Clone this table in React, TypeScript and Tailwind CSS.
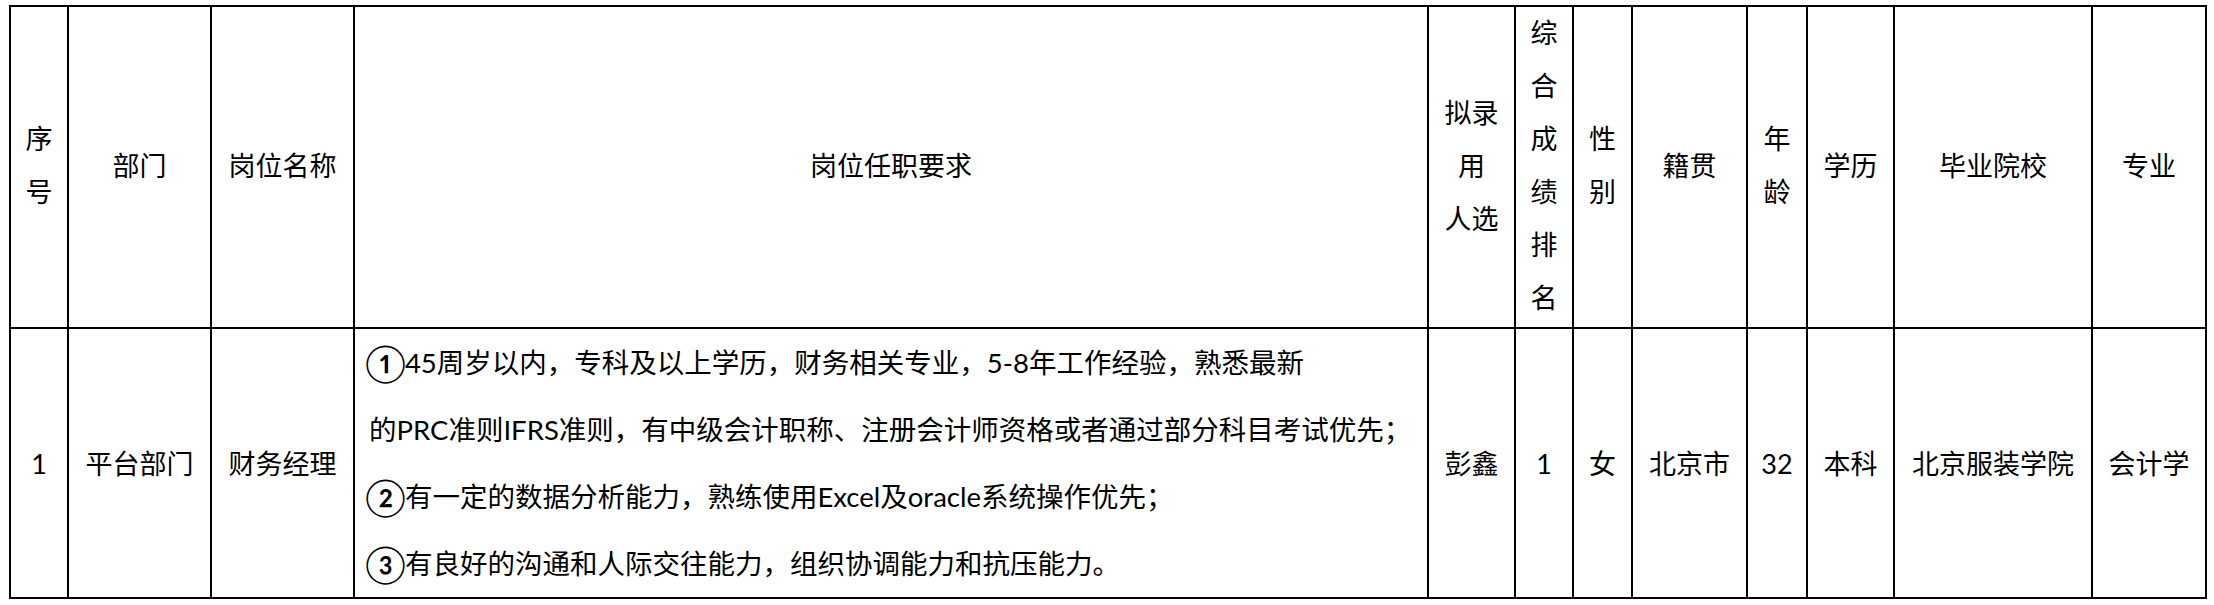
import * as React from "react";

// 招聘公示表 — 一行表头 + 一行数据，黑色网格线用 gap 透出背景实现
const headers: string[][] = [
  ["序", "号"],
  ["部门"],
  ["岗位名称"],
  ["岗位任职要求"],
  ["拟录", "用", "人选"],
  ["综", "合", "成", "绩", "排", "名"],
  ["性", "别"],
  ["籍贯"],
  ["年", "龄"],
  ["学历"],
  ["毕业院校"],
  ["专业"],
];

const requirements: [string, string][] = [
  ["①", "45周岁以内，专科及以上学历，财务相关专业，5-8年工作经验，熟悉最新"],
  ["", "的PRC准则IFRS准则，有中级会计职称、注册会计师资格或者通过部分科目考试优先；"],
  ["②", "有一定的数据分析能力，熟练使用Excel及oracle系统操作优先；"],
  ["③", "有良好的沟通和人际交往能力，组织协调能力和抗压能力。"],
];

function Cell({ children }: { children: React.ReactNode }) {
  return (
    <div className="bg-white flex items-center justify-center text-center text-[27px] text-black leading-[53px] font-['Lato','Noto_Sans_CJK_SC',sans-serif]">
      {children}
    </div>
  );
}

export default function App() {
  return (
    <div className="bg-white w-[2214px] h-[605px] pl-[9px] pt-[5px]">
      <div className="grid w-fit bg-black p-[2px] gap-[2px] grid-cols-[56px_141px_141px_1072px_85px_56px_57px_113px_58px_85px_196px_112px] grid-rows-[320px_268px]">
        {headers.map((lines, i) => (
          <div
            key={i}
            className="bg-white flex flex-col items-center justify-center text-center text-[27px] text-black leading-[53px] whitespace-nowrap font-['Liberation_Serif','Noto_Sans_CJK_SC',serif]"
          >
            {lines.map((l, j) => (
              <div key={j}>{l}</div>
            ))}
          </div>
        ))}

        <Cell>1</Cell>
        <Cell>平台部门</Cell>
        <Cell>财务经理</Cell>
        <div className="bg-white flex flex-col justify-center pl-[14px] text-[27.5px] text-black leading-[67px] whitespace-nowrap font-['Lato','Noto_Sans_CJK_SC',sans-serif]">
          {requirements.map(([mark, text], i) => (
            <div key={i} className="flex items-center h-[67px]">
              {mark && <span className="text-[37px] leading-none ml-[-4px] mr-[-1px]">{mark}</span>}
              <span>{text}</span>
            </div>
          ))}
        </div>
        <Cell>彭鑫</Cell>
        <Cell>1</Cell>
        <Cell>女</Cell>
        <Cell>北京市</Cell>
        <Cell>32</Cell>
        <Cell>本科</Cell>
        <Cell>北京服装学院</Cell>
        <Cell>会计学</Cell>
      </div>
    </div>
  );
}
